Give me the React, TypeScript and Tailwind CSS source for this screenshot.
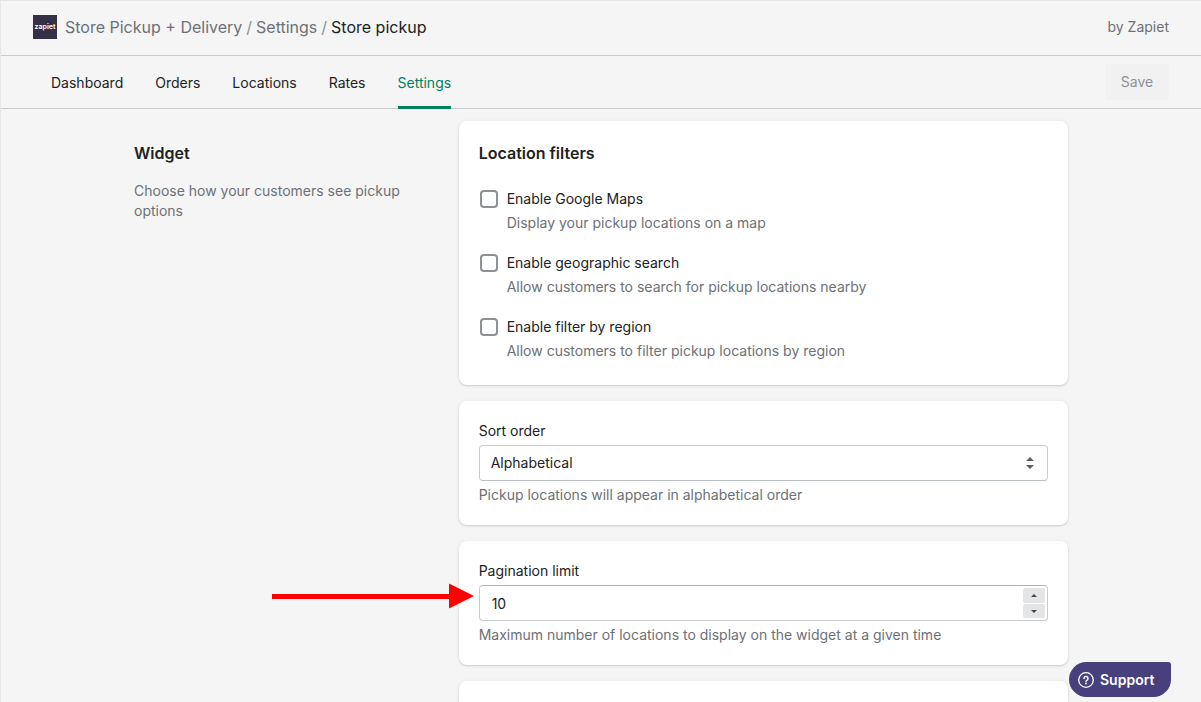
import { useState } from 'react';
import type { ReactNode } from 'react';

const tabs = ['Dashboard', 'Orders', 'Locations', 'Rates', 'Settings'];

const filters = [
  { id: 'maps', label: 'Enable Google Maps', help: 'Display your pickup locations on a map' },
  { id: 'geo', label: 'Enable geographic search', help: 'Allow customers to search for pickup locations nearby' },
  { id: 'region', label: 'Enable filter by region', help: 'Allow customers to filter pickup locations by region' },
];

function Card({ children }: { children?: ReactNode }) {
  return (
    <section className="min-h-24 rounded-lg bg-white p-5 shadow-[0_0_5px_rgba(23,24,24,0.05),0_1px_2px_rgba(0,0,0,0.15)]">
      {children}
    </section>
  );
}

function Header() {
  return (
    <header className="flex h-[55px] shrink-0 items-center justify-between border-b border-[#c9cccf] px-8 pb-0.5">
      <nav aria-label="Breadcrumb" className="flex items-center text-base text-[#6d7175]">
        <span className="mr-2 flex size-6 items-center justify-center bg-[#352f47] text-[7px] font-semibold text-white">
          zapiet
        </span>
        <a href="#app">Store Pickup + Delivery</a>
        <span className="mx-1 text-[#8c9196]">/</span>
        <a href="#settings">Settings</a>
        <span className="mx-1 text-[#8c9196]">/</span>
        <span className="text-[#202223]">Store pickup</span>
      </nav>
      <span className="text-sm text-[#6d7175]">by Zapiet</span>
    </header>
  );
}

function TabBar() {
  return (
    <div className="flex h-[53px] shrink-0 items-stretch justify-between border-b border-[#c9cccf] pr-8 pl-[50px]">
      <nav aria-label="Sections" className="-mb-px flex gap-8">
        {tabs.map((tab) => (
          <a
            key={tab}
            href={'#' + tab.toLowerCase()}
            className={
              tab === 'Settings'
                ? 'flex items-center border-b-3 border-[#008060] pt-[3px] text-[#008060]'
                : 'flex items-center'
            }
          >
            {tab}
          </a>
        ))}
      </nav>
      <button type="button" disabled className="h-9 w-16 self-center rounded bg-[#f1f1f1] text-[#8c9196]">
        Save
      </button>
    </div>
  );
}

function Arrow() {
  return (
    <svg
      className="pointer-events-none absolute -top-0.5 right-full mr-[5px] h-[26px] w-[202px]"
      viewBox="0 0 202 26"
      fill="#ff0000"
      aria-hidden="true"
    >
      <path d="M0 11h177V.5L202 13l-25 12.5V16H0z" />
    </svg>
  );
}

export default function App() {
  const [limit, setLimit] = useState(10);
  return (
    <div className="flex h-screen flex-col overflow-hidden border-t border-l border-[#e6e6e6] bg-[#f5f5f5] font-['Inter','Liberation_Sans',sans-serif] text-sm text-[#202223]">
      <Header />
      <TabBar />
      <main className="mx-auto flex w-full max-w-[998px] items-start gap-5 px-8 pt-3">
        <div className="flex-[1_1_240px] pt-5">
          <h2 className="text-base font-semibold">Widget</h2>
          <p className="mt-4 text-[#6d7175]">Choose how your customers see pickup options</p>
        </div>
        <div className="flex flex-[2_1_480px] flex-col gap-4">
          <Card>
            <h2 className="text-base font-semibold">Location filters</h2>
            <div className="mt-5 flex flex-col gap-4 pb-1">
              {filters.map((f) => (
                <div key={f.id} className="flex items-start gap-[9px] pl-px">
                  <input
                    id={f.id}
                    type="checkbox"
                    className="mt-[5px] size-[18px] shrink-0 appearance-none rounded-[4px] border-2 border-[#8c9196] bg-white checked:bg-[#008060]"
                  />
                  <div className="pt-1">
                    <label htmlFor={f.id} className="block">
                      {f.label}
                    </label>
                    <p className="mt-1 text-[#6d7175]">{f.help}</p>
                  </div>
                </div>
              ))}
            </div>
          </Card>
          <Card>
            <label htmlFor="sort" className="block">
              Sort order
            </label>
            <div className="relative mt-1">
              <select
                id="sort"
                className="h-9 w-full appearance-none rounded border border-[#c9cccf] border-b-[#babfc3] bg-white px-[11px]"
              >
                <option>Alphabetical</option>
                <option>Distance</option>
              </select>
              <svg
                className="pointer-events-none absolute top-3 right-3.5 h-3 w-2"
                viewBox="0 0 8 12"
                fill="#5c5f62"
                aria-hidden="true"
              >
                <path d="M4 0 8 4H0zM4 12 0 8h8z" />
              </svg>
            </div>
            <p className="mt-1 text-[#6d7175]">Pickup locations will appear in alphabetical order</p>
          </Card>
          <Card>
            <label htmlFor="limit" className="block">
              Pagination limit
            </label>
            <div className="relative mt-1">
              <input
                id="limit"
                type="number"
                value={limit}
                onChange={(e) => setLimit(Number(e.target.value))}
                className="block h-9 w-full rounded border border-[#c9cccf] border-t-[#aeb4b9] bg-white px-3 [appearance:textfield] [&::-webkit-inner-spin-button]:appearance-none"
              />
              <div className="absolute top-[3px] right-[3px] flex w-[22px] flex-col gap-px">
                <button
                  type="button"
                  aria-label="Increase"
                  onClick={() => setLimit(limit + 1)}
                  className="flex h-[15px] items-center justify-center rounded-[2px] bg-[#e4e5e7]"
                >
                  <svg className="h-[3px] w-1.5" viewBox="0 0 6 3" fill="#44474a" aria-hidden="true">
                    <path d="M3 0 6 3H0z" />
                  </svg>
                </button>
                <button
                  type="button"
                  aria-label="Decrease"
                  onClick={() => setLimit(limit - 1)}
                  className="flex h-[14px] items-center justify-center rounded-[2px] bg-[#e4e5e7]"
                >
                  <svg className="h-[3px] w-1.5" viewBox="0 0 6 3" fill="#44474a" aria-hidden="true">
                    <path d="M3 3 0 0h6z" />
                  </svg>
                </button>
              </div>
              <Arrow />
            </div>
            <p className="mt-1 text-[#6d7175]">
              Maximum number of locations to display on the widget at a given time
            </p>
          </Card>
          <Card />
        </div>
      </main>
      <button
        type="button"
        className="fixed right-[30px] bottom-[5px] flex h-[35px] w-[102px] items-center gap-1.5 rounded-[18px] rounded-tr-[3px] bg-[#47407c] pl-[9px] font-semibold text-white"
      >
        <svg className="size-4 shrink-0" viewBox="0 0 16 16" fill="none" stroke="#fff" strokeLinecap="round" aria-hidden="true">
          <circle cx="8" cy="8" r="7.3" strokeWidth="1.3" />
          <path d="M6 6.400a2 2 0 1 1 3.100 1.700C8.400 8.500 8 8.800 8 9.400" strokeWidth="1.500" />
          <circle cx="8" cy="11.500" r=".9" fill="#fff" stroke="none" />
        </svg>
        Support
      </button>
    </div>
  );
}
